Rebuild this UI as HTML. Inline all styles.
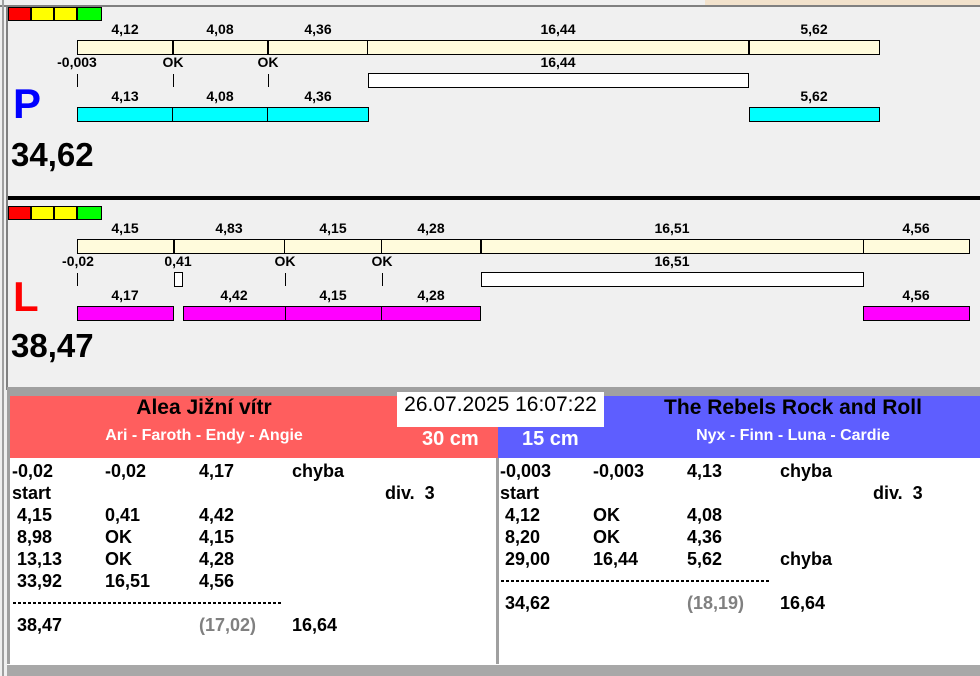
<!DOCTYPE html>
<html><head><meta charset="utf-8"><style>
*{margin:0;padding:0;box-sizing:border-box}
body{width:980px;height:676px;overflow:hidden;background:#f0f0f0;position:relative;font-family:"Liberation Sans",Arial,sans-serif}
div{position:absolute}
.b{border:1px solid #000}
.cr{background:#fffbdc}
.cy{background:#00ffff}
.mg{background:#ff00ff}
.wh{background:#fff}
.l{font-size:14px;font-weight:bold;color:#000;text-align:center;width:80px;line-height:15px}
.t{position:absolute;width:1px;background:#000;height:13px}
.v{height:14px;width:2px;background:#000}
.tb{font-size:18px;font-weight:bold;line-height:22px;color:#000;white-space:pre}
.dash{height:2px;background:repeating-linear-gradient(90deg,#000 0 3px,transparent 3px 5px)}
</style></head><body>
<div style="left:0;top:0;width:980px;height:5px;background:#f0f0f0"></div>
<div style="left:705px;top:0;width:275px;height:5px;background:#f2e2cc"></div>
<div style="left:0;top:5px;width:980px;height:2px;background:#808080"></div>
<div style="left:2px;top:0;width:2px;height:676px;background:#a0a0a0"></div>
<div style="left:6px;top:5px;width:2px;height:385px;background:#808080"></div>

<div style="left:8px;top:7px;width:23px;height:14px;background:#f00;border:1px solid #000"></div>
<div style="left:31px;top:7px;width:23px;height:14px;background:#ff0;border:1px solid #000"></div>
<div style="left:54px;top:7px;width:23px;height:14px;background:#ff0;border:1px solid #000"></div>
<div style="left:77px;top:7px;width:25px;height:14px;background:#0f0;border:1px solid #000"></div>

<div class="l" style="left:85px;top:22px">4,12</div>
<div class="l" style="left:180px;top:22px">4,08</div>
<div class="l" style="left:278px;top:22px">4,36</div>
<div class="l" style="left:518px;top:22px">16,44</div>
<div class="l" style="left:774px;top:22px">5,62</div>
<div class="b cr" style="left:77px;top:40px;width:803px;height:15px"></div>
<div class="v" style="left:172px;top:40px"></div>
<div class="v" style="left:267px;top:40px"></div>
<div class="v" style="left:367px;top:40px;width:1px"></div>
<div class="v" style="left:748px;top:40px"></div>

<div class="l" style="left:37px;top:55px">-0,003</div>
<div class="l" style="left:133px;top:55px">OK</div>
<div class="l" style="left:228px;top:55px">OK</div>
<div class="l" style="left:518px;top:55px">16,44</div>
<div class="t" style="left:77px;top:74px"></div>
<div class="t" style="left:173px;top:74px"></div>
<div class="t" style="left:268px;top:74px"></div>
<div class="b wh" style="left:368px;top:73px;width:381px;height:15px"></div>

<div style="left:13px;top:80px;font-size:42px;font-weight:bold;color:#0000ff;line-height:48px">P</div>
<div class="l" style="left:85px;top:89px">4,13</div>
<div class="l" style="left:180px;top:89px">4,08</div>
<div class="l" style="left:278px;top:89px">4,36</div>
<div class="l" style="left:774px;top:89px">5,62</div>
<div class="b cy" style="left:77px;top:107px;width:292px;height:15px"></div>
<div class="v" style="left:172px;top:107px;width:1px"></div>
<div class="v" style="left:267px;top:107px;width:1px"></div>
<div class="b cy" style="left:749px;top:107px;width:131px;height:15px"></div>
<div style="left:11px;top:135px;font-size:33px;font-weight:bold;line-height:40px">34,62</div>

<div style="left:8px;top:196px;width:972px;height:4px;background:#000"></div>

<div style="left:8px;top:206px;width:23px;height:14px;background:#f00;border:1px solid #000"></div>
<div style="left:31px;top:206px;width:23px;height:14px;background:#ff0;border:1px solid #000"></div>
<div style="left:54px;top:206px;width:23px;height:14px;background:#ff0;border:1px solid #000"></div>
<div style="left:77px;top:206px;width:25px;height:14px;background:#0f0;border:1px solid #000"></div>

<div class="l" style="left:85px;top:221px">4,15</div>
<div class="l" style="left:189px;top:221px">4,83</div>
<div class="l" style="left:293px;top:221px">4,15</div>
<div class="l" style="left:391px;top:221px">4,28</div>
<div class="l" style="left:632px;top:221px">16,51</div>
<div class="l" style="left:876px;top:221px">4,56</div>
<div class="b cr" style="left:77px;top:239px;width:893px;height:15px"></div>
<div class="v" style="left:173px;top:239px"></div>
<div class="v" style="left:284px;top:239px;width:1px"></div>
<div class="v" style="left:381px;top:239px;width:1px"></div>
<div class="v" style="left:480px;top:239px"></div>
<div class="v" style="left:863px;top:239px;width:1px"></div>

<div class="l" style="left:38px;top:254px">-0,02</div>
<div class="l" style="left:138px;top:254px">0,41</div>
<div class="l" style="left:245px;top:254px">OK</div>
<div class="l" style="left:342px;top:254px">OK</div>
<div class="l" style="left:632px;top:254px">16,51</div>
<div class="t" style="left:77px;top:273px"></div>
<div class="b wh" style="left:174px;top:272px;width:9px;height:15px"></div>
<div class="t" style="left:285px;top:273px"></div>
<div class="t" style="left:382px;top:273px"></div>
<div class="b wh" style="left:481px;top:272px;width:383px;height:15px"></div>

<div style="left:13px;top:273px;font-size:42px;font-weight:bold;color:#f00;line-height:48px">L</div>
<div class="l" style="left:85px;top:288px">4,17</div>
<div class="l" style="left:194px;top:288px">4,42</div>
<div class="l" style="left:293px;top:288px">4,15</div>
<div class="l" style="left:391px;top:288px">4,28</div>
<div class="l" style="left:876px;top:288px">4,56</div>
<div class="b mg" style="left:77px;top:306px;width:97px;height:15px"></div>
<div class="b mg" style="left:183px;top:306px;width:298px;height:15px"></div>
<div class="v" style="left:285px;top:306px;width:1px"></div>
<div class="v" style="left:381px;top:306px;width:1px"></div>
<div class="b mg" style="left:863px;top:306px;width:107px;height:15px"></div>
<div style="left:11px;top:326px;font-size:33px;font-weight:bold;line-height:40px">38,47</div>

<div style="left:7px;top:387px;width:973px;height:9px;background:#a0a0a0"></div>
<div style="left:7px;top:396px;width:3px;height:270px;background:#a0a0a0"></div>
<div style="left:10px;top:396px;width:488px;height:62px;background:#ff5e5e"></div>
<div style="left:498px;top:396px;width:482px;height:62px;background:#5e5eff"></div>
<div style="left:397px;top:392px;width:207px;height:35px;background:#fff"></div>
<div style="left:395px;top:392px;width:211px;line-height:26px;font-size:21px;text-align:center;color:#000;white-space:nowrap">26.07.2025 16:07:22</div>
<div style="left:4px;top:396px;width:400px;text-align:center;font-size:21px;font-weight:bold;line-height:24px">Alea Jižní vítr</div>
<div style="left:4px;top:427px;width:400px;text-align:center;font-size:16px;font-weight:bold;color:#fff;line-height:18px">Ari - Faroth - Endy - Angie</div>
<div style="left:422px;top:427px;font-size:20px;font-weight:bold;color:#fff;line-height:24px">30 cm</div>
<div style="left:522px;top:427px;font-size:20px;font-weight:bold;color:#fff;line-height:24px">15 cm</div>
<div style="left:593px;top:396px;width:400px;text-align:center;font-size:21px;font-weight:bold;line-height:24px">The Rebels Rock and Roll</div>
<div style="left:593px;top:427px;width:400px;text-align:center;font-size:16px;font-weight:bold;color:#fff;line-height:18px">Nyx - Finn - Luna - Cardie</div>

<div style="left:10px;top:458px;width:486px;height:206px;background:#fff"></div>
<div style="left:496px;top:458px;width:3px;height:206px;background:#a0a0a0"></div>
<div style="left:499px;top:458px;width:481px;height:206px;background:#fff"></div>
<div style="left:7px;top:664px;width:973px;height:12px;background:#a8a8a8"></div>
<div style="left:7px;top:664px;width:973px;height:1px;background:#fff"></div>

<div class="tb" style="left:12px;top:460px">-0,02</div>
<div class="tb" style="left:105px;top:460px">-0,02</div>
<div class="tb" style="left:199px;top:460px">4,17</div>
<div class="tb" style="left:292px;top:460px">chyba</div>
<div class="tb" style="left:12px;top:482px">start</div>
<div class="tb" style="left:385px;top:482px">div.  3</div>
<div class="tb" style="left:17px;top:504px">4,15</div><div class="tb" style="left:105px;top:504px">0,41</div><div class="tb" style="left:199px;top:504px">4,42</div>
<div class="tb" style="left:17px;top:526px">8,98</div><div class="tb" style="left:105px;top:526px">OK</div><div class="tb" style="left:199px;top:526px">4,15</div>
<div class="tb" style="left:17px;top:548px">13,13</div><div class="tb" style="left:105px;top:548px">OK</div><div class="tb" style="left:199px;top:548px">4,28</div>
<div class="tb" style="left:17px;top:570px">33,92</div><div class="tb" style="left:105px;top:570px">16,51</div><div class="tb" style="left:199px;top:570px">4,56</div>
<div class="dash" style="left:13px;top:602px;width:270px"></div>
<div class="tb" style="left:17px;top:614px">38,47</div>
<div class="tb" style="left:199px;top:614px;color:#808080">(17,02)</div>
<div class="tb" style="left:292px;top:614px">16,64</div>

<div class="tb" style="left:500px;top:460px">-0,003</div>
<div class="tb" style="left:593px;top:460px">-0,003</div>
<div class="tb" style="left:687px;top:460px">4,13</div>
<div class="tb" style="left:780px;top:460px">chyba</div>
<div class="tb" style="left:500px;top:482px">start</div>
<div class="tb" style="left:873px;top:482px">div.  3</div>
<div class="tb" style="left:505px;top:504px">4,12</div><div class="tb" style="left:593px;top:504px">OK</div><div class="tb" style="left:687px;top:504px">4,08</div>
<div class="tb" style="left:505px;top:526px">8,20</div><div class="tb" style="left:593px;top:526px">OK</div><div class="tb" style="left:687px;top:526px">4,36</div>
<div class="tb" style="left:505px;top:548px">29,00</div><div class="tb" style="left:593px;top:548px">16,44</div><div class="tb" style="left:687px;top:548px">5,62</div><div class="tb" style="left:780px;top:548px">chyba</div>
<div class="dash" style="left:501px;top:580px;width:270px"></div>
<div class="tb" style="left:505px;top:592px">34,62</div>
<div class="tb" style="left:687px;top:592px;color:#808080">(18,19)</div>
<div class="tb" style="left:780px;top:592px">16,64</div>
</body></html>
